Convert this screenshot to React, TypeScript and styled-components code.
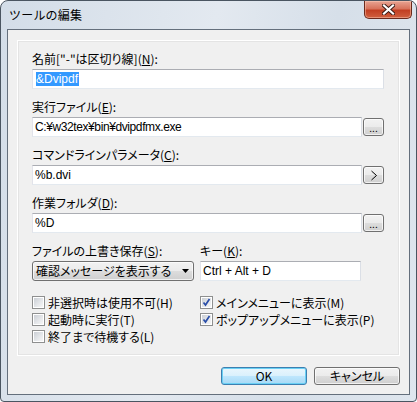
import styled, { createGlobalStyle } from "styled-components";

const GlobalStyle = createGlobalStyle`
  html, body {
    margin: 0;
    padding: 0;
    background: #ffffff;
  }
  body {
    font-family: "Noto Sans CJK JP", "Liberation Sans", sans-serif;
    font-size: 12px;
    font-feature-settings: "palt";
    color: #000;
  }
`;

const Window = styled.div`
  width: 417px;
  height: 402px;
  box-sizing: border-box;
  border: 1px solid #4a5561;
  border-radius: 8px 8px 4px 4px;
  background: linear-gradient(100deg, #d3dde8 0%, #e3e9f0 45%, #d6dfe9 70%, #dfe6ee 100%);
  display: flex;
  flex-direction: column;
  overflow: hidden;
`;

const TitleBar = styled.div`
  height: 28px;
  display: flex;
  justify-content: space-between;
  align-items: flex-start;
  padding: 0 4px 0 8px;
`;

const Title = styled.div`
  line-height: 28px;
  font-size: 12px;
  font-feature-settings: normal;
  letter-spacing: 0.2px;
`;

const CloseButton = styled.div`
  width: 48px;
  height: 18px;
  box-sizing: border-box;
  border: 1px solid #6b2a1d;
  border-top: none;
  border-radius: 0 0 5px 5px;
  background: linear-gradient(180deg, #e8a493 0%, #d7735c 45%, #c23f22 55%, #d0603f 100%);
  box-shadow: inset 0 0 0 1px rgba(255, 210, 190, 0.45);
  display: flex;
  align-items: center;
  justify-content: center;
`;

const Client = styled.div`
  flex: 1;
  margin: 0 6px 6px 6px;
  border: 1px solid #646f7c;
  background: #f0f0f0;
  padding: 10px 9px 0 9px;
  display: flex;
  flex-direction: column;
`;

const Panel = styled.div`
  border: 1px solid #ffffff;
  box-shadow: 0 0 0 1px #e4e4e4 inset;
  padding: 10px 15px 10px 14px;
  display: flex;
  flex-direction: column;
`;

const Field = styled.div`
  display: flex;
  flex-direction: column;
  margin-bottom: 10px;
`;

const Label = styled.div`
  line-height: 16px;
  height: 16px;
  margin-bottom: 2px;
  white-space: nowrap;
`;

const U = styled.span`
  text-decoration: underline;
`;

const InputRow = styled.div`
  display: flex;
  align-items: flex-start;
`;

const TextBox = styled.div<{ $tight?: boolean }>`
  flex: 1;
  height: 20px;
  box-sizing: border-box;
  border: 1px solid;
  border-color: #abadb3 #dbdfe6 #e3e9ef #e2e3ea;
  background: #ffffff;
  padding: 0 2px;
  line-height: 18px;
  font-family: "Liberation Sans", "Noto Sans CJK JP", sans-serif;
  letter-spacing: ${(p) => (p.$tight ? "-0.4px" : "0")};
  white-space: nowrap;
  overflow: hidden;
`;

const Selected = styled.span`
  display: inline-block;
  background: #3399ff;
  color: #ffffff;
  line-height: 14px;
  margin-left: 1px;
  padding-right: 1px;
`;

const SmallButton = styled.div`
  width: 21px;
  height: 18px;
  margin: 1px 0 0 1px;
  box-sizing: border-box;
  border: 1px solid #707070;
  border-radius: 3px;
  background: linear-gradient(180deg, #f2f2f2 0%, #ebebeb 50%, #dddddd 51%, #cfcfcf 100%);
  box-shadow: inset 0 0 0 1px rgba(255, 255, 255, 0.7);
  display: flex;
  align-items: center;
  justify-content: center;
  font-size: 10px;
`;

const TwoCol = styled.div`
  display: grid;
  grid-template-columns: 162px 161px;
  column-gap: 6px;
`;

const Combo = styled.div`
  height: 20px;
  box-sizing: border-box;
  border: 1px solid #707070;
  border-radius: 3px;
  background: linear-gradient(180deg, #f2f2f2 0%, #ebebeb 50%, #dddddd 51%, #cfcfcf 100%);
  box-shadow: inset 0 0 0 1px rgba(255, 255, 255, 0.7);
  display: flex;
  align-items: center;
  justify-content: space-between;
  padding: 0 4px 0 3px;
  line-height: 18px;
  white-space: nowrap;
`;

const CheckArea = styled(TwoCol)`
  margin-top: 3px;
`;

const CheckColumn = styled.div`
  display: flex;
  flex-direction: column;
`;

const CheckRow = styled.div`
  height: 17px;
  display: flex;
  align-items: center;
  gap: 3px;
  white-space: nowrap;
`;

const Box = styled.div`
  width: 13px;
  height: 13px;
  box-sizing: border-box;
  border: 1px solid #8e8f8f;
  background: #ffffff;
  padding: 1px;
  flex: none;
  position: relative;
`;

const BoxInner = styled.div`
  width: 9px;
  height: 9px;
  background: linear-gradient(135deg, #cbcfd5 0%, #e6e8eb 60%, #f6f6f6 100%);
`;

const CheckMark = styled.svg`
  position: absolute;
  left: 1px;
  top: 1px;
`;

const Footer = styled.div`
  display: flex;
  justify-content: flex-end;
  gap: 7px;
  padding-top: 11px;
`;

const DialogButton = styled.div<{ $default?: boolean }>`
  width: 86px;
  height: 18px;
  box-sizing: border-box;
  border: 1px solid ${(p) => (p.$default ? "#3c7fb1" : "#707070")};
  border-radius: 3px;
  background: ${(p) =>
    p.$default
      ? "linear-gradient(180deg, #eaf6fd 0%, #d9f0fc 50%, #bee6fd 51%, #a7d9f5 100%)"
      : "linear-gradient(180deg, #f2f2f2 0%, #ebebeb 50%, #dddddd 51%, #cfcfcf 100%)"};
  box-shadow: inset 0 0 0 1px ${(p) => (p.$default ? "#6ad0f4" : "rgba(255,255,255,0.7)")};
  display: flex;
  align-items: center;
  justify-content: center;
  line-height: 16px;
`;

function CheckBox({ checked, children }: { checked?: boolean; children: React.ReactNode }) {
  return (
    <CheckRow>
      <Box>
        <BoxInner />
        {checked && (
          <CheckMark width="9" height="9" viewBox="0 0 9 9">
            <path d="M1.5 4.5 L3.5 7 L7.5 1" fill="none" stroke="#2a4ea8" strokeWidth="1.7" />
          </CheckMark>
        )}
      </Box>
      <span>{children}</span>
    </CheckRow>
  );
}

export default function App() {
  return (
    <>
      <GlobalStyle />
      <Window>
        <TitleBar>
          <Title>ツールの編集</Title>
          <CloseButton>
            <svg width="13" height="11" viewBox="0 0 13 11">
              <path d="M2 1.5 L11 9.5 M11 1.5 L2 9.5" stroke="#3a1a14" strokeWidth="4" strokeLinecap="square" />
              <path d="M2 1.5 L11 9.5 M11 1.5 L2 9.5" stroke="#ffffff" strokeWidth="2.2" strokeLinecap="square" />
            </svg>
          </CloseButton>
        </TitleBar>
        <Client>
          <Panel>
            <Field>
              <Label>
                名前["-"は区切り線](<U>N</U>):
              </Label>
              <InputRow>
                <TextBox>
                  <Selected>&amp;Dvipdf</Selected>
                </TextBox>
              </InputRow>
            </Field>
            <Field>
              <Label>
                実行ファイル(<U>E</U>):
              </Label>
              <InputRow>
                <TextBox $tight>C:¥w32tex¥bin¥dvipdfmx.exe</TextBox>
                <SmallButton>...</SmallButton>
              </InputRow>
            </Field>
            <Field>
              <Label>
                コマンドラインパラメータ(<U>C</U>):
              </Label>
              <InputRow>
                <TextBox>%b.dvi</TextBox>
                <SmallButton>
                  <svg width="8" height="11" viewBox="0 0 8 11">
                    <path d="M1.5 1 L6.5 5.5 L1.5 10" fill="none" stroke="#000" strokeWidth="1" />
                  </svg>
                </SmallButton>
              </InputRow>
            </Field>
            <Field>
              <Label>
                作業フォルダ(<U>D</U>):
              </Label>
              <InputRow>
                <TextBox>%D</TextBox>
                <SmallButton>...</SmallButton>
              </InputRow>
            </Field>
            <TwoCol>
              <Field>
                <Label>
                  ファイルの上書き保存(<U>S</U>):
                </Label>
                <Combo>
                  <span>確認メッセージを表示する</span>
                  <svg width="7" height="4" viewBox="0 0 7 4">
                    <path d="M0 0 L7 0 L3.5 4 Z" fill="#000" />
                  </svg>
                </Combo>
              </Field>
              <Field>
                <Label>
                  キー(<U>K</U>):
                </Label>
                <InputRow>
                  <TextBox>Ctrl + Alt + D</TextBox>
                </InputRow>
              </Field>
            </TwoCol>
            <CheckArea>
              <CheckColumn>
                <CheckBox>非選択時は使用不可(H)</CheckBox>
                <CheckBox>起動時に実行(T)</CheckBox>
                <CheckBox>終了まで待機する(L)</CheckBox>
              </CheckColumn>
              <CheckColumn>
                <CheckBox checked>メインメニューに表示(M)</CheckBox>
                <CheckBox checked>ポップアップメニューに表示(P)</CheckBox>
              </CheckColumn>
            </CheckArea>
          </Panel>
          <Footer>
            <DialogButton $default>OK</DialogButton>
            <DialogButton>キャンセル</DialogButton>
          </Footer>
        </Client>
      </Window>
    </>
  );
}
